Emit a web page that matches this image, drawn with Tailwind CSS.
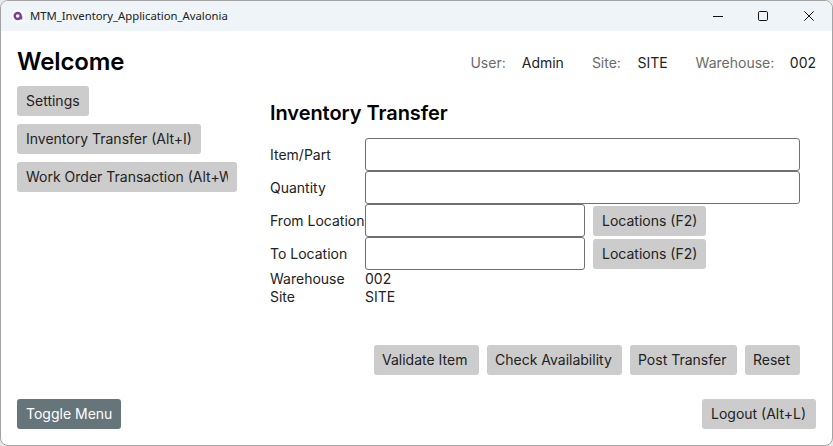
<!DOCTYPE html>
<html lang="en">
<head>
  <meta charset="UTF-8">
  <title>MTM_Inventory_Application_Avalonia</title>
  <script src="https://cdn.jsdelivr.net/npm/@tailwindcss/browser@4"></script>
</head>
<body class="w-[833px] h-[446px] overflow-hidden bg-[#e9e9e9] font-['Inter',sans-serif] text-[14px] text-[#222]">
  <div class="h-[446px] flex flex-col border border-[#a3a3a3] rounded-[8px] overflow-hidden bg-white">
    <!-- title bar -->
    <div class="h-[30px] shrink-0 bg-[#eff4f9] flex items-center pl-[10px]">
      <svg width="14" height="14" viewBox="0 0 14 14">
        <path d="M7 0.5a6.5 6.5 0 1 0 0 13h6.5V7A6.5 6.5 0 0 0 7 0.5z" fill="#fff"/>
        <circle cx="6.7" cy="7" r="3" fill="none" stroke="#7d3c98" stroke-width="2.4"/>
        <rect x="9" y="7" width="2.3" height="3.4" fill="#7d3c98"/>
      </svg>
      <span class="ml-[5px] text-[11.3px] text-[#222] font-['Noto_Sans',sans-serif]">MTM_Inventory_Application_Avalonia</span>
      <div class="ml-auto flex items-center h-full">
        <!-- window buttons -->
        <svg class="mr-[35px]" width="10" height="10" viewBox="0 0 10 10"><path d="M0 5.5H10" stroke="#111" stroke-width="1"/></svg>
        <svg class="mr-[36px]" width="10" height="10" viewBox="0 0 10 10"><rect x="0.5" y="0.5" width="9" height="9" rx="1.2" fill="none" stroke="#111" stroke-width="1"/></svg>
        <svg class="mr-[18px]" width="10" height="10" viewBox="0 0 10 10"><path d="M0.3 0.3L9.7 9.7M9.7 0.3L0.3 9.7" stroke="#111" stroke-width="1"/></svg>
      </div>
    </div>

    <div class="flex-1 flex flex-col px-[16px] pt-[15px] pb-[16px]">
      <div class="flex items-center justify-between h-[32px]">
        <h1 class="text-[24px] font-semibold leading-[32px] tracking-[-0.1px] text-black">Welcome</h1>
        <div class="flex gap-[16px]">
          <span class="text-[#6b6b6b]">User:</span><span>Admin</span>
          <span class="text-[#6b6b6b] ml-[12px]">Site:</span><span class="ml-[0.5px]">SITE</span>
          <span class="text-[#6b6b6b] ml-[12px]">Warehouse:</span><span class="ml-[-0.5px]">002</span>
        </div>
      </div>

      <div class="flex-1 flex mt-[8px]">
        <div class="w-[253px] shrink-0 flex flex-col items-start gap-[8px]">
          <button class="h-[30px] px-[9px] pb-[1px] bg-[#ccc] rounded-[3px]">Settings</button>
          <button class="h-[30px] px-[9px] pb-[1px] bg-[#ccc] rounded-[3px]">Inventory Transfer (Alt+I)</button>
          <button class="h-[30px] w-[220px] pl-[9px] pb-[1px] bg-[#ccc] rounded-[3px] text-left"><span class="block w-[202px] overflow-hidden whitespace-nowrap">Work Order Transaction (Alt+W)</span></button>
        </div>

        <div class="flex-1 pt-[13px] pr-[16px] flex flex-col">
          <h2 class="text-[20px] font-semibold leading-[28px] tracking-[-0.05px] text-black mb-[11px]">Inventory Transfer</h2>
          <div class="grid grid-cols-[95px_1fr] items-center">
            <label>Item/Part</label>
            <input type="text" class="h-[33px] border border-[#707070] rounded-[3px] bg-white">
            <label>Quantity</label>
            <input type="text" class="h-[33px] border border-[#707070] rounded-[3px] bg-white">
            <label class="whitespace-nowrap">From Location</label>
            <div class="flex items-center gap-[8px]">
              <input type="text" class="w-[220px] h-[33px] border border-[#707070] rounded-[3px] bg-white">
              <button class="h-[30px] px-[9px] pb-[1px] bg-[#ccc] rounded-[3px]">Locations (F2)</button>
            </div>
            <label>To Location</label>
            <div class="flex items-center gap-[8px]">
              <input type="text" class="w-[220px] h-[33px] border border-[#707070] rounded-[3px] bg-white">
              <button class="h-[30px] px-[9px] pb-[1px] bg-[#ccc] rounded-[3px]">Locations (F2)</button>
            </div>
            <span class="leading-[18px]">Warehouse</span><span class="leading-[18px]">002</span>
            <span class="leading-[18px]">Site</span><span class="leading-[18px]">SITE</span>
          </div>
          <div class="flex justify-end gap-[8px] mt-[39px]">
            <button class="h-[30px] w-[105.5px] pl-[8.5px] text-left pb-[1px] bg-[#ccc] rounded-[3px]">Validate Item</button>
            <button class="h-[30px] w-[134.5px] pl-[8px] text-left pb-[1px] bg-[#ccc] rounded-[3px]">Check Availability</button>
            <button class="h-[30px] w-[107px] pl-[8.5px] text-left pb-[1px] bg-[#ccc] rounded-[3px]">Post Transfer</button>
            <button class="h-[30px] w-[55.5px] pl-[8.5px] text-left pb-[1px] bg-[#ccc] rounded-[3px]">Reset</button>
          </div>
        </div>
      </div>

      <div class="flex items-center justify-between">
        <button class="h-[30px] px-[9px] pb-[1px] bg-[#66757a] text-white rounded-[3px]">Toggle Menu</button>
        <button class="h-[30px] w-[114px] pl-[9px] pb-[1px] text-left bg-[#ccc] rounded-[3px]">Logout (Alt+L)</button>
      </div>
    </div>
  </div>
</body>
</html>
